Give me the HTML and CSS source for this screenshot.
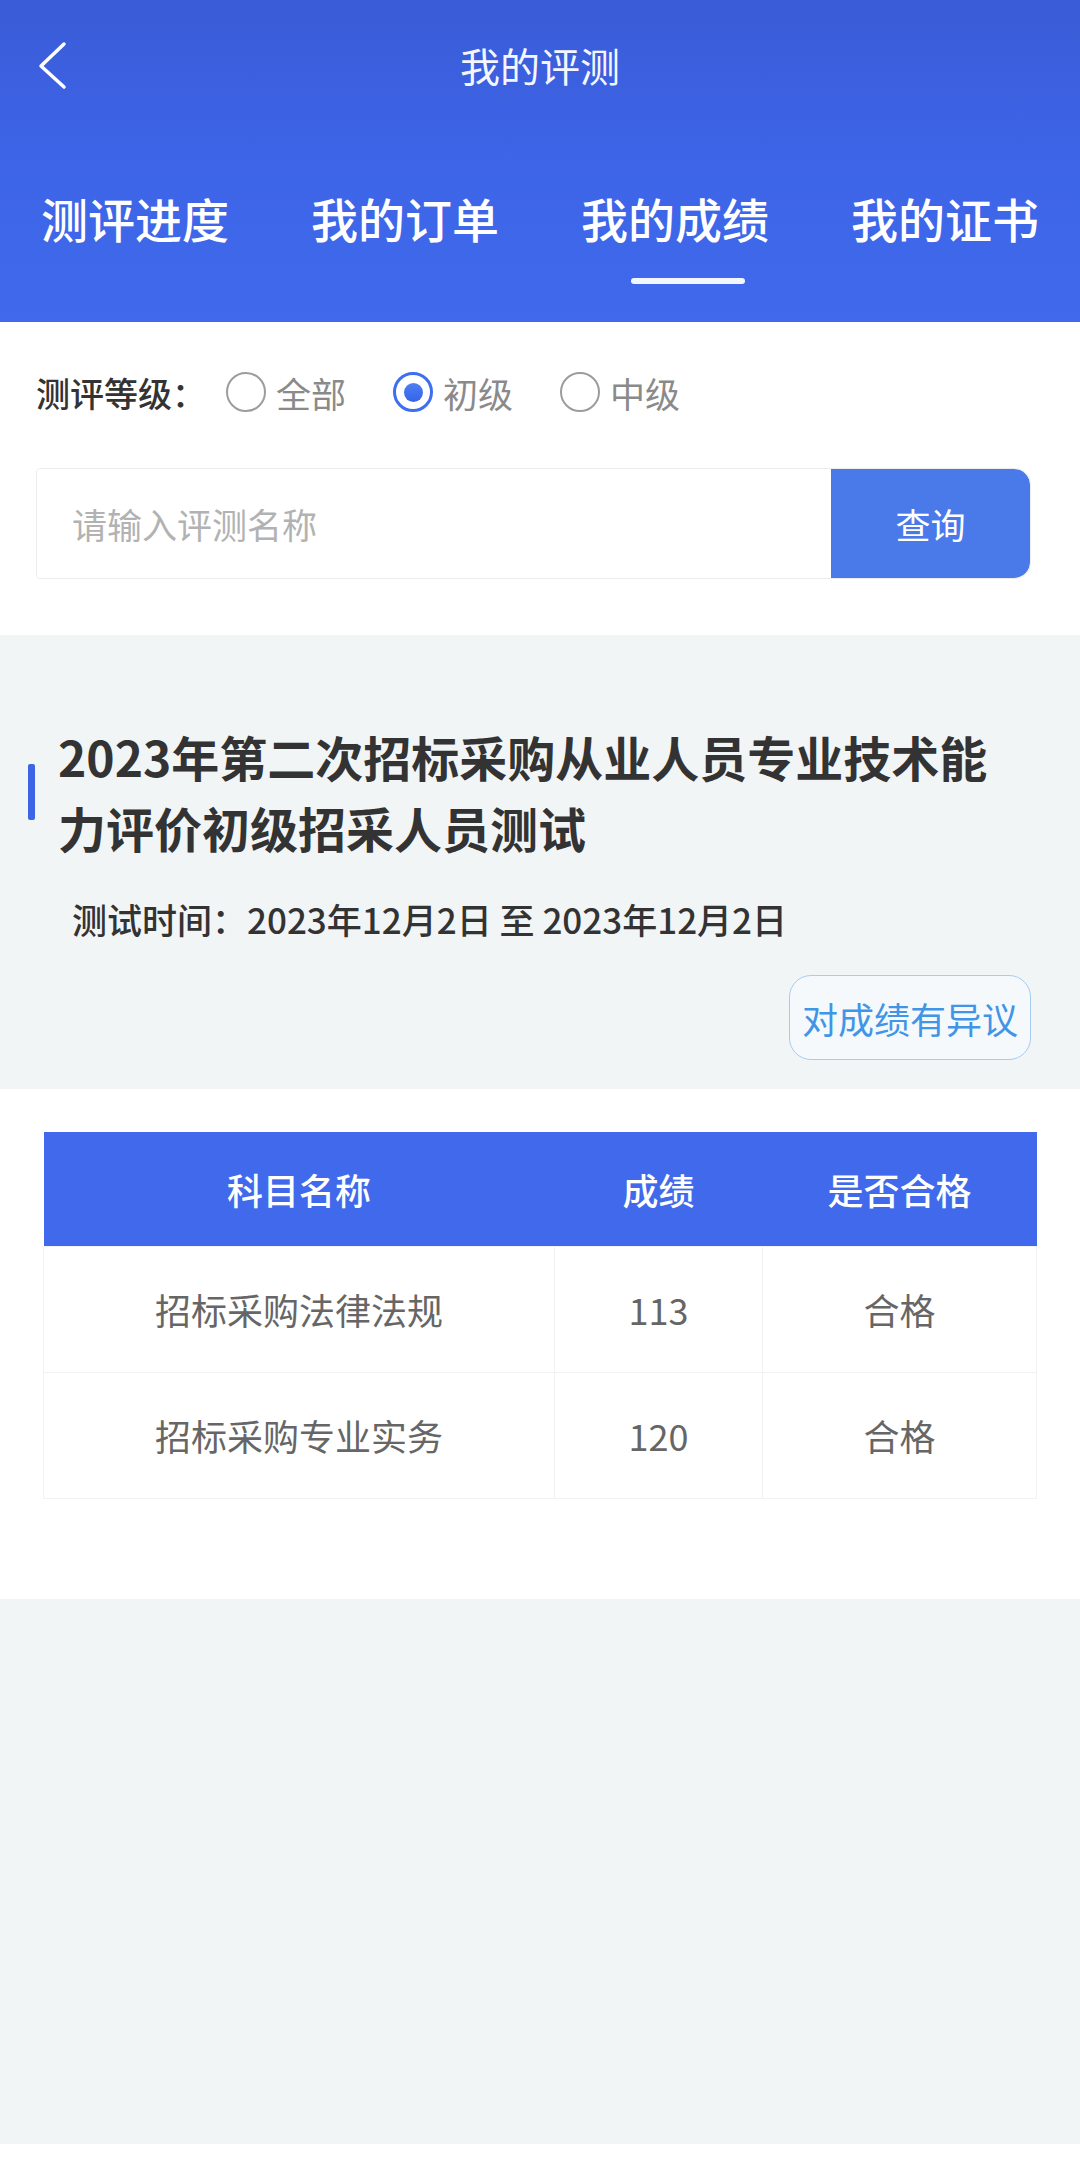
FILE: index.html
```html
<!DOCTYPE html>
<html lang="zh-CN">
<head>
<meta charset="utf-8">
<title>我的评测</title>
<link rel="stylesheet" href="styles.css">
</head>
<body>
<div class="page">
  <header class="header">
    <div class="nav">
      <div class="nav-left">
        <svg class="back" width="34" height="52" viewBox="0 0 34 52" aria-hidden="true">
          <path d="M28 4 L5 26 L28 47" fill="none" stroke="#ffffff" stroke-width="3.5" stroke-linecap="round" stroke-linejoin="round"/>
        </svg>
      </div>
      <div class="nav-title">我的评测</div>
      <div class="nav-right"></div>
    </div>
    <div class="tabs">
      <div class="tab"><span class="tab-text">测评进度</span></div>
      <div class="tab"><span class="tab-text">我的订单</span></div>
      <div class="tab tab-active"><span class="tab-text">我的成绩</span><span class="tab-line"></span></div>
      <div class="tab"><span class="tab-text">我的证书</span></div>
    </div>
  </header>

  <section class="filter">
    <div class="level-row">
      <span class="level-label">测评等级：</span>
      <div class="options">
        <label class="option"><span class="radio"></span><span class="option-text">全部</span></label>
        <label class="option"><span class="radio radio-on"><span class="dot"></span></span><span class="option-text">初级</span></label>
        <label class="option"><span class="radio"></span><span class="option-text">中级</span></label>
      </div>
    </div>
    <div class="search">
      <div class="search-input">请输入评测名称</div>
      <div class="search-btn">查询</div>
    </div>
  </section>

  <section class="exam">
    <div class="exam-title-row">
      <span class="bar"></span>
      <h2 class="exam-title">2023年第二次招标采购从业人员专业技术能力评价初级招采人员测试</h2>
    </div>
    <div class="exam-date">测试时间：2023年12月2日 至 2023年12月2日</div>
    <div class="exam-actions">
      <div class="dispute">对成绩有异议</div>
    </div>
  </section>

  <section class="scores">
    <table class="score-table">
      <thead>
        <tr>
          <th class="c1">科目名称</th>
          <th class="c2">成绩</th>
          <th class="c3">是否合格</th>
        </tr>
      </thead>
      <tbody>
        <tr>
          <td>招标采购法律法规</td>
          <td>113</td>
          <td>合格</td>
        </tr>
        <tr>
          <td>招标采购专业实务</td>
          <td>120</td>
          <td>合格</td>
        </tr>
      </tbody>
    </table>
  </section>

  <div class="filler"></div>
  <div class="bottom-strip"></div>
</div>
</body>
</html>
```

FILE: styles.css
```css
* {
  box-sizing: border-box;
}

html, body {
  margin: 0;
  padding: 0;
  background: #ffffff;
}

body {
  font-family: "Noto Sans CJK SC", "Noto Sans", "Liberation Sans", sans-serif;
  color: #333333;
}

.page {
  width: 1080px;
  display: flex;
  flex-direction: column;
}

/* Header */
.header {
  height: 322px;
  background: linear-gradient(180deg, #3a5bd7 0%, #3d64e6 45%, #4069eb 100%);
  color: #ffffff;
  display: flex;
  flex-direction: column;
}

.nav {
  height: 130px;
  display: grid;
  grid-template-columns: 1fr auto 1fr;
  align-items: center;
}

.nav-left {
  display: flex;
  align-items: center;
  padding-left: 36px;
  padding-top: 2px;
}

.back {
  display: block;
}

.nav-title {
  font-size: 40px;
  line-height: 50px;
  font-weight: 400;
  color: #f4f6ff;
}

.tabs {
  display: flex;
  padding-top: 64px;
}

.tab {
  flex: 1;
  display: flex;
  flex-direction: column;
  align-items: center;
}

.tab-text {
  font-size: 47px;
  line-height: 48px;
  font-weight: 500;
  color: #ffffff;
}

.tab-active {
  align-items: stretch;
  text-align: center;
}

.tab-line {
  display: block;
  width: 114px;
  height: 6px;
  margin: 36px 0 0 91px;
  border-radius: 3px;
  background: #f2f6ff;
}

/* Filter */
.filter {
  background: #ffffff;
  padding: 50px 49px 56px 36px;
  display: flex;
  flex-direction: column;
  gap: 56px;
}

.level-row {
  height: 40px;
  display: flex;
  align-items: center;
}

.level-label {
  font-size: 34px;
  font-weight: 500;
  color: #333333;
  margin-right: 20px;
}

.options {
  display: flex;
  align-items: center;
  gap: 47px;
}

.option {
  display: flex;
  align-items: center;
  gap: 10px;
}

.radio {
  width: 40px;
  height: 40px;
  border-radius: 50%;
  border: 2.5px solid #9c9c9c;
  display: flex;
  align-items: center;
  justify-content: center;
  background: #ffffff;
}

.radio-on {
  border: 3px solid #3d70ee;
}

.dot {
  width: 19px;
  height: 19px;
  border-radius: 50%;
  background: linear-gradient(180deg, #4d7ff2, #3563e8);
}

.option-text {
  font-size: 35px;
  color: #8a8a8a;
}

.search {
  height: 111px;
  display: flex;
  border: 1px solid #ececec;
  border-radius: 4px 16px 16px 4px;
  overflow: hidden;
}

.search-input {
  flex: 1;
  display: flex;
  align-items: center;
  padding-left: 35px;
  font-size: 35px;
  color: #b2b2b2;
  background: #ffffff;
}

.search-btn {
  width: 199px;
  display: flex;
  align-items: center;
  justify-content: center;
  background: #4a7aea;
  color: #ffffff;
  font-size: 35px;
  border-radius: 0 16px 16px 0;
}

/* Exam info */
.exam {
  background: #f1f5f6;
  padding: 86px 49px 29px 28px;
  display: flex;
  flex-direction: column;
}

.exam-title-row {
  display: flex;
  align-items: center;
}

.bar {
  flex: none;
  width: 7px;
  height: 56px;
  border-radius: 2px;
  background: #3d63e6;
  margin-right: 23px;
}

.exam-title {
  margin: 0;
  width: 945px;
  font-size: 48px;
  line-height: 71px;
  font-weight: 700;
  color: #333333;
}

.exam-date {
  margin-top: 34px;
  padding-left: 44px;
  font-size: 35px;
  line-height: 44px;
  font-weight: 500;
  color: #333333;
}

.exam-actions {
  margin-top: 34px;
  display: flex;
  justify-content: flex-end;
}

.dispute {
  height: 85px;
  padding: 0 12px;
  display: flex;
  align-items: center;
  border: 1.5px solid #a8ccf1;
  border-radius: 22px;
  background: #f5f9fc;
  color: #4195e6;
  font-size: 36px;
}

/* Scores table */
.scores {
  background: #ffffff;
  padding: 43px 44px 100px 43px;
}

.score-table {
  width: 993px;
  border-collapse: collapse;
  table-layout: fixed;
}

.score-table th.c1 {
  width: 511px;
}

.score-table th.c2 {
  width: 208px;
}

.score-table th.c3 {
  width: 274px;
}

.score-table th {
  height: 114px;
  background: #4169ec;
  color: #ffffff;
  font-size: 36px;
  font-weight: 500;
  text-align: center;
  padding: 0;
}

.score-table td {
  height: 126px;
  border: 1.5px solid #f1f2f4;
  color: #666666;
  font-size: 36px;
  text-align: center;
  padding: 0;
}

.filler {
  height: 545px;
  background: #f1f5f6;
}

.bottom-strip {
  height: 19px;
  background: #ffffff;
}
```
